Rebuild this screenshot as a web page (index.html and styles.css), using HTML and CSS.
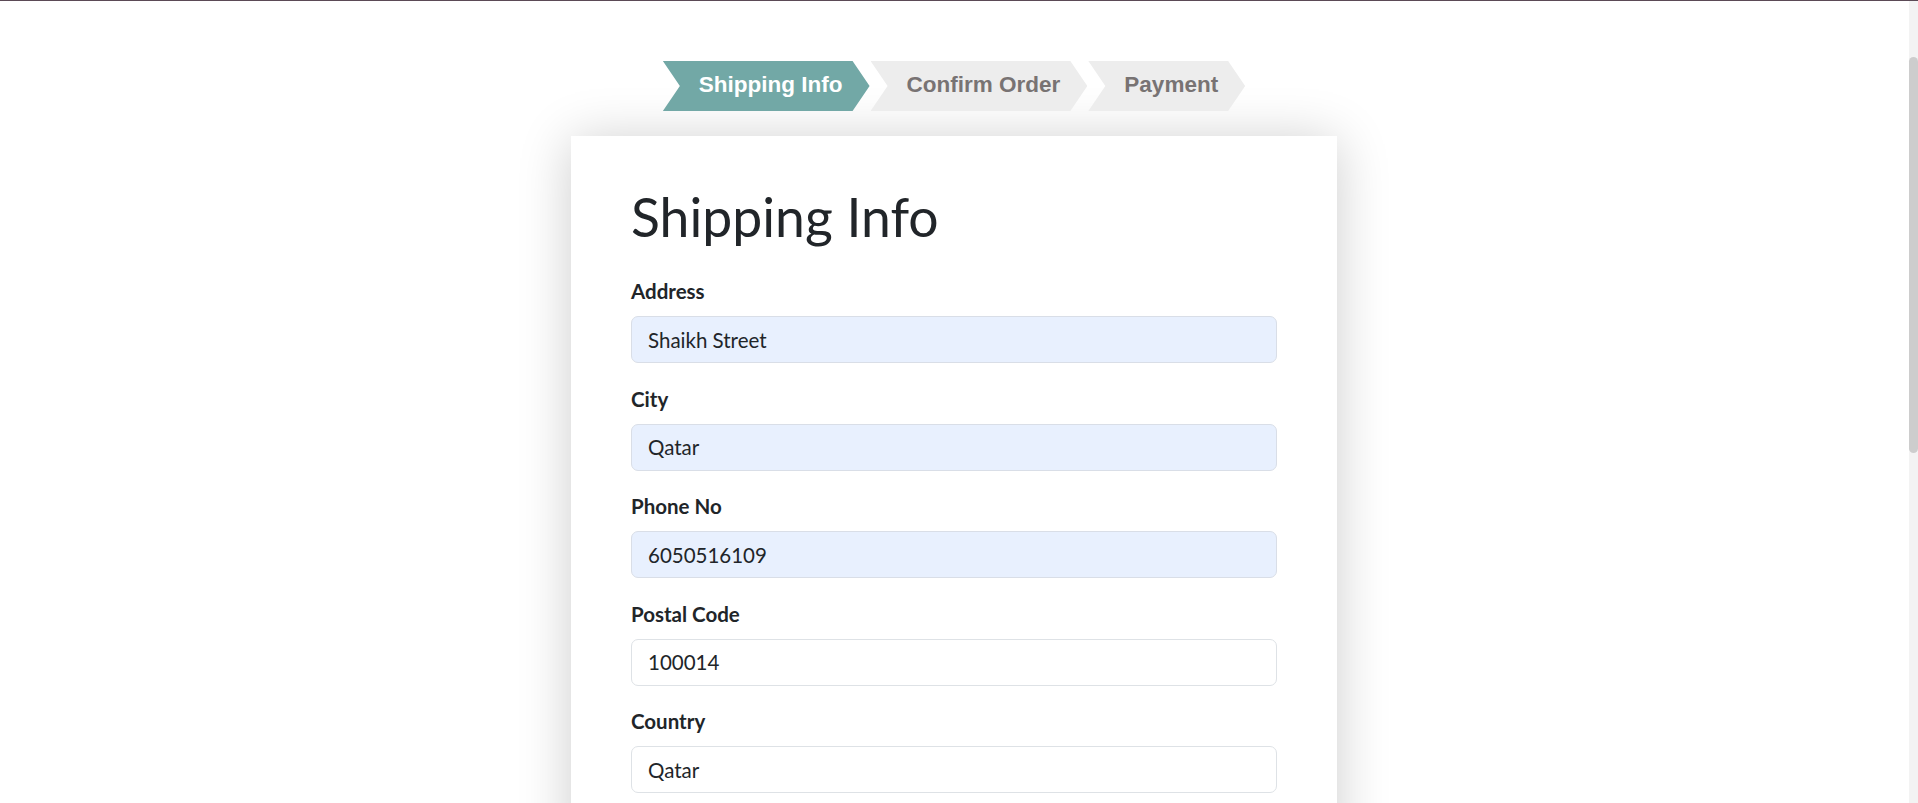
FILE: index.html
```html
<!DOCTYPE html>
<html lang="en">
<head>
<meta charset="utf-8">
<title>Shipping Info</title>
<link rel="stylesheet" href="styles.css">
</head>
<body>
<div class="app">
  <main class="viewport">
    <nav class="steps" aria-label="Checkout steps">
      <div class="step step-active">Shipping Info</div>
      <div class="step">Confirm Order</div>
      <div class="step">Payment</div>
    </nav>
    <section class="card">
      <h1 class="card-title">Shipping Info</h1>
      <form class="form">
        <div class="field">
          <label class="field-label" for="address">Address</label>
          <input class="field-input autofilled" id="address" type="text" value="Shaikh Street">
        </div>
        <div class="field">
          <label class="field-label" for="city">City</label>
          <input class="field-input autofilled" id="city" type="text" value="Qatar">
        </div>
        <div class="field">
          <label class="field-label" for="phone">Phone No</label>
          <input class="field-input autofilled" id="phone" type="text" value="6050516109">
        </div>
        <div class="field">
          <label class="field-label" for="postal">Postal Code</label>
          <input class="field-input" id="postal" type="text" value="100014">
        </div>
        <div class="field">
          <label class="field-label" for="country">Country</label>
          <input class="field-input" id="country" type="text" value="Qatar">
        </div>
      </form>
    </section>
  </main>
  <div class="scrollbar" aria-hidden="true"><div class="scrollbar-thumb"></div></div>
</div>
</body>
</html>
```
FILE: styles.css
```css
html, body {
  margin: 0;
  padding: 0;
  height: 100%;
  overflow: hidden;
  background: #ffffff;
}

.app {
  display: flex;
  height: 100vh;
  border-top: 1px solid #5b4a56;
  box-sizing: border-box;
}

.viewport {
  flex: 1;
  min-width: 0;
  overflow: hidden;
  display: flex;
  flex-direction: column;
  align-items: center;
  padding-right: 1px;
  font-family: "Lato", "Open Sans", sans-serif;
  color: #212529;
}

/* checkout steps */
.steps {
  display: flex;
  gap: 1px;
  margin-top: 60px;
  flex-shrink: 0;
}

.step {
  height: 50px;
  box-sizing: border-box;
  padding: 0 27px 2px 36px;
  line-height: 48px;
  font-family: "Liberation Sans", Arial, sans-serif;
  font-weight: 700;
  font-size: 22.5px;
  color: #787373;
  background: #ededed;
  white-space: nowrap;
  clip-path: polygon(0 0, calc(100% - 17px) 0, 100% 50%, calc(100% - 17px) 100%, 0 100%, 17px 50%);
}

.step-active {
  background: #72a8a6;
  color: #ffffff;
}

/* card */
.card {
  width: 766px;
  box-sizing: border-box;
  flex-shrink: 0;
  margin-top: 25px;
  padding: 47px 60px 40px;
  background: #ffffff;
  box-shadow: 0 4px 50px rgba(0, 0, 0, 0.2);
}

.card-title {
  margin: 0 0 27px;
  font-size: 53.5px;
  line-height: 66px;
  font-weight: 400;
  color: #212529;
}

.field {
  display: flex;
  flex-direction: column;
  margin-bottom: 20.6px;
}

.field-label {
  font-size: 20.5px;
  font-weight: 700;
  line-height: 30px;
  margin-bottom: 10px;
  color: #212529;
}

.field-input {
  appearance: none;
  -webkit-appearance: none;
  display: block;
  width: 100%;
  height: 47px;
  box-sizing: border-box;
  margin: 0;
  padding: 0 16px;
  border: 1px solid #dee2e6;
  border-radius: 7px;
  background: #ffffff;
  font-family: "Lato", "Open Sans", sans-serif;
  font-size: 20.5px;
  color: #212529;
  outline: none;
}

.field-input.autofilled {
  background: #e8f0fe;
  border-color: #d9dee7;
}

/* scrollbar */
.scrollbar {
  width: 9px;
  flex-shrink: 0;
  background: #f3f3f3;
  padding-top: 56px;
  box-sizing: border-box;
}

.scrollbar-thumb {
  height: 396px;
  background: #cdcdcd;
  border-radius: 5px;
}
```
